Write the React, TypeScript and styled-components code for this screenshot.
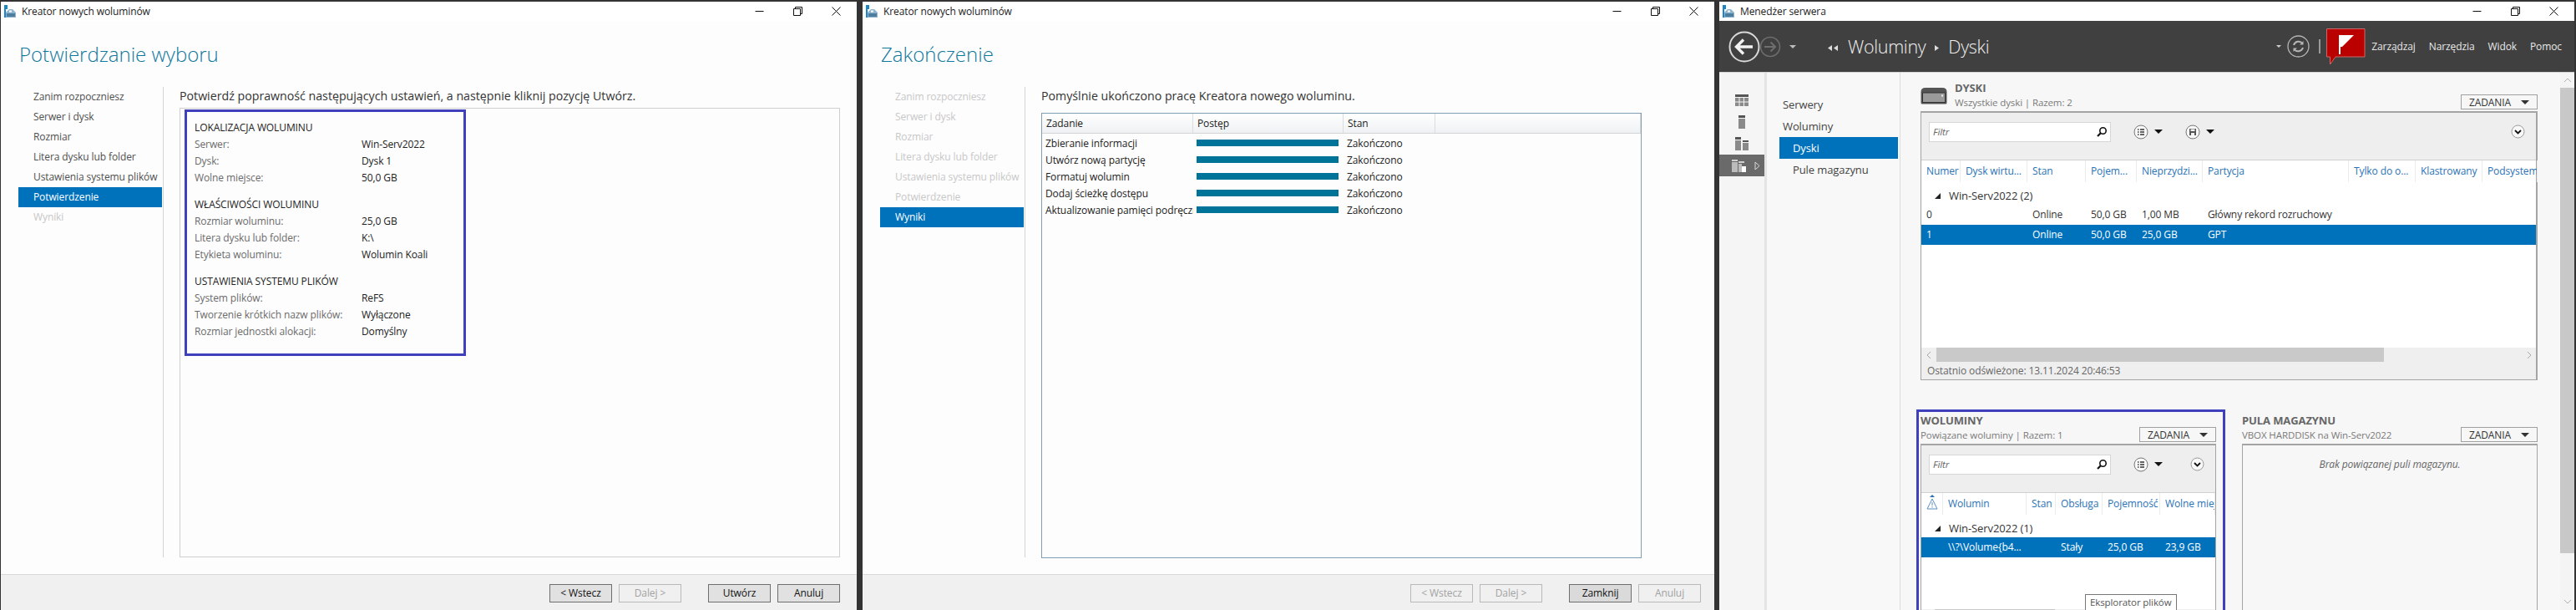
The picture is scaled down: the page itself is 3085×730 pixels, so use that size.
import React from 'react';
import styled, { createGlobalStyle } from 'styled-components';

const GlobalStyle = createGlobalStyle`
    html, body {
        margin: 0;
        padding: 0;
        background: #333333;
        overflow: hidden;
    }
    * {
        box-sizing: border-box;
    }
`;

const FONT = `'Open Sans', 'Noto Sans', sans-serif`;
const BLUE = '#0072bc';

const AppIcon = () => (
    <svg width="15" height="15" viewBox="0 0 15 15">
        <rect x="0" y="0" width="4" height="5" fill="#1a86c8" />
        <rect x="0" y="5" width="2" height="10" fill="#1a86c8" />
        <path d="M2 9 L6 5 H10 L14 9 V15 H2 Z" fill="#8fb3cc" />
        <rect x="3" y="10" width="10" height="4" fill="#4c7f9f" />
        <rect x="6" y="6.5" width="3" height="2" fill="#ffffff" />
    </svg>
);

const WindowControls = () => (
    <Controls>
        <ControlButton>
            <svg width="11" height="11" viewBox="0 0 11 11">
                <path d="M0.5 5.5 H10.5" stroke="#111" fill="none" />
            </svg>
        </ControlButton>
        <ControlButton>
            <svg width="11" height="11" viewBox="0 0 11 11">
                <path d="M0.5 2.5 H8.5 V10.5 H0.5 Z M2.5 2.5 V0.5 H10.5 V8.5 H8.5" stroke="#111" fill="none" />
            </svg>
        </ControlButton>
        <ControlButton>
            <svg width="11" height="11" viewBox="0 0 11 11">
                <path d="M0.5 0.5 L10.5 10.5 M10.5 0.5 L0.5 10.5" stroke="#111" fill="none" />
            </svg>
        </ControlButton>
    </Controls>
);

const STEPS = [
    'Zanim rozpoczniesz',
    'Serwer i dysk',
    'Rozmiar',
    'Litera dysku lub folder',
    'Ustawienia systemu plików',
    'Potwierdzenie',
    'Wyniki',
];

interface WizardProps {
    width: number;
    footerPad: number;
    heading: string;
    active: number;
    dimmedUntil: number;
    buttons: { label: string; enabled: boolean; strong?: boolean }[];
    children: React.ReactNode;
}

const Wizard = (props: WizardProps) => {
    const { width, footerPad, heading, active, dimmedUntil, buttons, children } = props;
    return (
        <WizardWindow $width={width}>
            <TitleBar>
                <AppIcon />
                <TitleText>Kreator nowych woluminów</TitleText>
                <WindowControls />
            </TitleBar>
            <WizardHeading>{heading}</WizardHeading>
            <WizardBody>
                <StepList>
                    {STEPS.map((step, i) => (
                        <Step key={step} $active={i === active} $dim={i !== active && (i > active || i < dimmedUntil)}>
                            {step}
                        </Step>
                    ))}
                </StepList>
                <WizardContent>{children}</WizardContent>
            </WizardBody>
            <WizardFooter $pad={footerPad}>
                {buttons.map((b, i) => (
                    <FootButton key={b.label} $enabled={b.enabled} $strong={b.strong} $wide={i === 2}>
                        {b.label}
                    </FootButton>
                ))}
            </WizardFooter>
        </WizardWindow>
    );
};

const SUMMARY = [
    {
        title: 'LOKALIZACJA WOLUMINU',
        rows: [
            ['Serwer:', 'Win-Serv2022'],
            ['Dysk:', 'Dysk 1'],
            ['Wolne miejsce:', '50,0 GB'],
        ],
    },
    {
        title: 'WŁAŚCIWOŚCI WOLUMINU',
        rows: [
            ['Rozmiar woluminu:', '25,0 GB'],
            ['Litera dysku lub folder:', 'K:\\'],
            ['Etykieta woluminu:', 'Wolumin Koali'],
        ],
    },
    {
        title: 'USTAWIENIA SYSTEMU PLIKÓW',
        rows: [
            ['System plików:', 'ReFS'],
            ['Tworzenie krótkich nazw plików:', 'Wyłączone'],
            ['Rozmiar jednostki alokacji:', 'Domyślny'],
        ],
    },
];

const RESULTS = [
    'Zbieranie informacji',
    'Utwórz nową partycję',
    'Formatuj wolumin',
    'Dodaj ścieżkę dostępu',
    'Aktualizowanie pamięci podręcznej',
];

const TOP_COLUMNS = [47, 80, 70, 61, 79, 175, 80, 80, 66];
const BOTTOM_COLUMNS = [26, 100, 35, 56, 69, 66];

const SearchIcon = () => (
    <svg width="14" height="14" viewBox="0 0 14 14">
        <circle cx="8.5" cy="5.5" r="3.7" stroke="#111" strokeWidth="1.6" fill="none" />
        <path d="M5.8 8.2 L2 12" stroke="#111" strokeWidth="2.2" />
    </svg>
);

const ListCircle = () => (
    <svg width="18" height="18" viewBox="0 0 18 18">
        <circle cx="9" cy="9" r="8" stroke="#777" fill="#f8f8f8" />
        <path d="M5 6 H6.5 M5 9 H6.5 M5 12 H6.5 M8 6 H13 M8 9 H13 M8 12 H13" stroke="#333" strokeWidth="1.4" />
    </svg>
);

const SaveCircle = () => (
    <svg width="18" height="18" viewBox="0 0 18 18">
        <circle cx="9" cy="9" r="8" stroke="#777" fill="#f8f8f8" />
        <rect x="5" y="5" width="8" height="8" fill="#555" />
        <rect x="6.5" y="5.5" width="5" height="2.5" fill="#f0f0f0" />
        <rect x="7" y="10" width="4" height="3" fill="#f0f0f0" />
    </svg>
);

const ChevronCircle = () => (
    <svg width="17" height="17" viewBox="0 0 17 17">
        <circle cx="8.5" cy="8.5" r="7.5" stroke="#999" fill="#f8f8f8" />
        <path d="M5 7 L8.5 10.5 L12 7" stroke="#111" strokeWidth="1.8" fill="none" />
    </svg>
);

const Filter = () => (
    <FilterBox>
        <FilterText>Filtr</FilterText>
        <SearchIcon />
    </FilterBox>
);

const Tasks = () => (
    <TasksButton>
        ZADANIA
        <CaretDown $size={5} />
    </TasksButton>
);

const HScrollBar = ({ thumb, lead }: { thumb: number; lead: number }) => (
    <HScroll>
        <HArrow $width={lead}>
            <svg width="6" height="10" viewBox="0 0 6 10">
                <path d="M5 1 L1 5 L5 9" stroke="#a8a8a8" fill="none" />
            </svg>
        </HArrow>
        <HThumb style={{ width: thumb }} />
        <HArrow $width={17} $end>
            <svg width="6" height="10" viewBox="0 0 6 10">
                <path d="M1 1 L5 5 L1 9" stroke="#a8a8a8" fill="none" />
            </svg>
        </HArrow>
    </HScroll>
);

const App = () => (
    <>
        <GlobalStyle />
        <Screen>
            <Wizard
                width={1025}
                footerPad={20}
                heading="Potwierdzanie wyboru"
                active={5}
                dimmedUntil={0}
                buttons={[
                    { label: '< Wstecz', enabled: true },
                    { label: 'Dalej >', enabled: false },
                    { label: 'Utwórz', enabled: true },
                    { label: 'Anuluj', enabled: true },
                ]}
            >
                <Intro>Potwierdź poprawność następujących ustawień, a następnie kliknij pozycję Utwórz.</Intro>
                <SummaryFrame>
                    <SummaryBox>
                        {SUMMARY.map((section) => (
                            <SummarySection key={section.title}>
                                <SummaryTitle>{section.title}</SummaryTitle>
                                {section.rows.map(([label, value]) => (
                                    <SummaryRow key={label}>
                                        <SummaryLabel>{label}</SummaryLabel>
                                        <span>{value}</span>
                                    </SummaryRow>
                                ))}
                            </SummarySection>
                        ))}
                    </SummaryBox>
                </SummaryFrame>
            </Wizard>

            <Wizard
                width={1020}
                footerPad={16}
                heading="Zakończenie"
                active={6}
                dimmedUntil={6}
                buttons={[
                    { label: '< Wstecz', enabled: false },
                    { label: 'Dalej >', enabled: false },
                    { label: 'Zamknij', enabled: true, strong: true },
                    { label: 'Anuluj', enabled: false },
                ]}
            >
                <Intro>Pomyślnie ukończono pracę Kreatora nowego woluminu.</Intro>
                <ResultList>
                    <ResultHead>
                        <span>Zadanie</span>
                        <span>Postęp</span>
                        <span>Stan</span>
                        <span />
                    </ResultHead>
                    {RESULTS.map((task) => (
                        <ResultRow key={task}>
                            <ResultTask>{task}</ResultTask>
                            <ProgressBar />
                            <span>Zakończono</span>
                        </ResultRow>
                    ))}
                </ResultList>
            </Wizard>

            <ServerWindow>
                <TitleBar>
                    <AppIcon />
                    <TitleText>Menedżer serwera</TitleText>
                    <WindowControls />
                </TitleBar>
                <DarkHeader>
                    <NavCircles>
                        <svg width="38" height="38" viewBox="0 0 38 38">
                            <circle cx="19" cy="19" r="17.5" stroke="#d8d8d8" strokeWidth="2" fill="none" />
                            <path d="M29 19 H10 M18 10.5 L9.5 19 L18 27.5" stroke="#f2f2f2" strokeWidth="3.4" fill="none" />
                        </svg>
                        <svg width="26" height="26" viewBox="0 0 26 26">
                            <circle cx="13" cy="13" r="11.5" stroke="#6e6e6e" strokeWidth="1.5" fill="none" />
                            <path d="M6 13 H19 M13.5 7.5 L19 13 L13.5 18.5" stroke="#6e6e6e" strokeWidth="2" fill="none" />
                        </svg>
                        <CaretDown $size={4} $color="#bdbdbd" />
                    </NavCircles>
                    <Crumbs>
                        <svg width="13" height="7" viewBox="0 0 13 7">
                            <path d="M5 0 V7 L0 3.5 Z M12 0 V7 L7 3.5 Z" fill="#dcdcdc" />
                        </svg>
                        <span>Woluminy</span>
                        <svg width="5" height="7" viewBox="0 0 5 7">
                            <path d="M0 0 V7 L5 3.5 Z" fill="#dcdcdc" />
                        </svg>
                        <span>Dyski</span>
                    </Crumbs>
                    <HeaderRight>
                        <CaretDown $size={3} $color="#d0d0d0" />
                        <svg width="27" height="27" viewBox="0 0 27 27">
                            <circle cx="13.5" cy="13.5" r="12.5" stroke="#b5b5b5" strokeWidth="1.3" fill="none" />
                            <path d="M8 12 A6 6 0 0 1 18.5 10 M19 15 A6 6 0 0 1 8.5 17" stroke="#b5b5b5" strokeWidth="2" fill="none" />
                            <path d="M19.5 7 V11.5 H15 Z M7.5 20 V15.5 H12 Z" fill="#b5b5b5" />
                        </svg>
                        <HeaderBar />
                        <svg width="47" height="44" viewBox="0 0 47 44">
                            <path d="M0.5 0.5 H46 V34 H11 L4.5 43 V34 H0.5 Z" fill="#bb0000" stroke="#c86a6a" />
                            <path d="M15 8 H17 V31 H15 Z" fill="#ffffff" />
                            <path d="M17 8 H33 L19 22 H17 Z" fill="#ffffff" />
                        </svg>
                        <MenuItems>
                            <span>Zarządzaj</span>
                            <span>Narzędzia</span>
                            <span>Widok</span>
                            <span>Pomoc</span>
                        </MenuItems>
                    </HeaderRight>
                </DarkHeader>

                <ServerMain>
                    <Rail>
                        <RailItem>
                            <svg width="16" height="14" viewBox="0 0 16 14">
                                <path d="M0 0 H16 V3 H0 Z" fill="#555" />
                                <path d="M0 4 H4.5 V8.5 H0 Z M5.5 4 H10 V8.5 H5.5 Z M11 4 H16 V8.5 H11 Z M0 9.5 H4.5 V14 H0 Z M5.5 9.5 H10 V14 H5.5 Z M11 9.5 H16 V14 H11 Z" fill="#8a8a8a" />
                            </svg>
                        </RailItem>
                        <RailItem>
                            <svg width="8" height="16" viewBox="0 0 8 16">
                                <path d="M0 0 H8 V3 H0 Z" fill="#555" />
                                <path d="M0 4 H8 V16 H0 Z" fill="#8a8a8a" />
                            </svg>
                        </RailItem>
                        <RailItem>
                            <svg width="16" height="16" viewBox="0 0 16 16">
                                <path d="M0 0 H7 V3 H0 Z M9 4 H16 V6 H9 Z" fill="#555" />
                                <path d="M0 4 H7 V16 H0 Z M9 7 H16 V16 H9 Z" fill="#8a8a8a" />
                            </svg>
                        </RailItem>
                        <RailItem $active>
                            <svg width="18" height="15" viewBox="0 0 18 15">
                                <path d="M0 0 H7 V2 H0 Z M8 2 H15 V4 H8 Z" fill="#d0d0d0" />
                                <path d="M0 3 H7 V15 H0 Z M8 5 H12 V15 H8 Z" fill="#bcbcbc" />
                                <path d="M12 8 H17 V15 H12 Z" fill="#ffffff" />
                            </svg>
                            <svg width="7" height="11" viewBox="0 0 7 11">
                                <path d="M1 1 L6 5.5 L1 10 Z" stroke="#d8d8d8" fill="none" />
                            </svg>
                        </RailItem>
                    </Rail>
                    <NavPane>
                        <NavItem>Serwery</NavItem>
                        <NavItem>Woluminy</NavItem>
                        <NavItem $child $active>Dyski</NavItem>
                        <NavItem $child>Pule magazynu</NavItem>
                    </NavPane>
                    <ContentArea>
                        <SectionHead>
                            <svg width="32" height="21" viewBox="0 0 32 21">
                                <path d="M0.5 6 Q0.5 1 6 1 H26 Q31.5 1 31.5 6 V19 Q31.5 20.5 30 20.5 H2 Q0.5 20.5 0.5 19 Z" fill="#555" />
                                <rect x="2.5" y="7" width="27" height="11.5" fill="#9a9a9a" stroke="#333" />
                                <rect x="25" y="9.5" width="2" height="2" fill="#eee" />
                            </svg>
                            <SectionTitles>
                                <SectionTitle>DYSKI</SectionTitle>
                                <SectionSub>Wszystkie dyski | Razem: 2</SectionSub>
                            </SectionTitles>
                            <Tasks />
                        </SectionHead>
                        <DiskPanel>
                            <Toolbar>
                                <Filter />
                                <ToolGroup>
                                    <ListCircle />
                                    <CaretDown $size={5} $color="#111" />
                                </ToolGroup>
                                <ToolGroup>
                                    <SaveCircle />
                                    <CaretDown $size={5} $color="#111" />
                                </ToolGroup>
                                <ToolEnd>
                                    <ChevronCircle />
                                </ToolEnd>
                            </Toolbar>
                            <GridHead $columns={TOP_COLUMNS}>
                                {['Numer', 'Dysk wirtu...', 'Stan', 'Pojem...', 'Nieprzydzi...', 'Partycja', 'Tylko do o...', 'Klastrowany', 'Podsystem'].map((h) => (
                                    <HeadCell key={h}>{h}</HeadCell>
                                ))}
                            </GridHead>
                            <GroupRow>
                                <CornerCaret />
                                Win-Serv2022 (2)
                            </GroupRow>
                            <GridRow $columns={TOP_COLUMNS}>
                                <Cell>0</Cell>
                                <Cell />
                                <Cell>Online</Cell>
                                <Cell>50,0 GB</Cell>
                                <Cell>1,00 MB</Cell>
                                <Cell>Główny rekord rozruchowy</Cell>
                            </GridRow>
                            <GridRow $columns={TOP_COLUMNS} $selected>
                                <Cell>1</Cell>
                                <Cell />
                                <Cell>Online</Cell>
                                <Cell>50,0 GB</Cell>
                                <Cell>25,0 GB</Cell>
                                <Cell>GPT</Cell>
                            </GridRow>
                            <GridFill />
                            <HScrollBar lead={18} thumb={536} />
                            <RefreshNote>Ostatnio odświeżone: 13.11.2024 20:46:53</RefreshNote>
                        </DiskPanel>

                        <BottomGrid>
                            <Highlighted>
                                <SectionHead>
                                    <SectionTitles>
                                        <SectionTitle>WOLUMINY</SectionTitle>
                                        <SectionSub>Powiązane woluminy | Razem: 1</SectionSub>
                                    </SectionTitles>
                                    <Tasks />
                                </SectionHead>
                                <BottomPanel>
                                    <Toolbar>
                                        <Filter />
                                        <ToolGroup>
                                            <ListCircle />
                                            <CaretDown $size={5} $color="#111" />
                                        </ToolGroup>
                                        <ToolEnd $right={13}>
                                            <ChevronCircle />
                                        </ToolEnd>
                                    </Toolbar>
                                    <GridHead $columns={BOTTOM_COLUMNS}>
                                        <HeadIcon>
                                            <svg width="14" height="18" viewBox="0 0 14 18">
                                                <path d="M7 0 L10 3 H4 Z" fill="#2a72b5" />
                                                <path d="M7 5 L13 17 H1 Z M7 9 V13 M7 14 V15.5" stroke="#5b8fc0" fill="none" />
                                            </svg>
                                        </HeadIcon>
                                        {['Wolumin', 'Stan', 'Obsługa', 'Pojemność', 'Wolne miejsce'].map((h) => (
                                            <HeadCell key={h}>{h}</HeadCell>
                                        ))}
                                    </GridHead>
                                    <GroupRow>
                                        <CornerCaret />
                                        Win-Serv2022 (1)
                                    </GroupRow>
                                    <GridRow $columns={BOTTOM_COLUMNS} $selected>
                                        <Cell />
                                        <Cell>{'\\\\?\\Volume{b4...'}</Cell>
                                        <Cell />
                                        <Cell>Stały</Cell>
                                        <Cell>25,0 GB</Cell>
                                        <Cell>23,9 GB</Cell>
                                    </GridRow>
                                    <GridFill />
                                    <HScrollBar lead={16} thumb={144} />
                                    <Tooltip>Eksplorator plików</Tooltip>
                                </BottomPanel>
                            </Highlighted>
                            <div>
                                <SectionHead>
                                    <SectionTitles>
                                        <SectionTitle>PULA MAGAZYNU</SectionTitle>
                                        <SectionSub>VBOX HARDDISK na Win-Serv2022</SectionSub>
                                    </SectionTitles>
                                    <Tasks />
                                </SectionHead>
                                <EmptyPanel>Brak powiązanej puli magazynu.</EmptyPanel>
                            </div>
                        </BottomGrid>
                    </ContentArea>
                    <VScroll>
                        <ScrollArrow>
                            <svg width="10" height="6" viewBox="0 0 10 6">
                                <path d="M1 5 L5 1 L9 5" stroke="#b0b0b0" fill="none" />
                            </svg>
                        </ScrollArrow>
                        <VThumb />
                        <ScrollArrow $end>
                            <svg width="10" height="6" viewBox="0 0 10 6">
                                <path d="M1 1 L5 5 L9 1" stroke="#b0b0b0" fill="none" />
                            </svg>
                        </ScrollArrow>
                    </VScroll>
                </ServerMain>
            </ServerWindow>
        </Screen>
    </>
);

export default App;

const Screen = styled.div`
    display: flex;
    width: 3085px;
    height: 730px;
    padding: 2px 2px 0 1px;
    gap: 0;
    background: #333333;
    font-family: ${FONT};
    font-size: 12px;
    letter-spacing: -0.1px;
    color: #222222;
    overflow: hidden;
`;

const TitleBar = styled.div`
    display: flex;
    align-items: center;
    flex: none;
    height: 23px;
    padding-left: 4px;
    background: #ffffff;
`;

const TitleText = styled.div`
    margin-left: 6px;
    font-size: 12px;
    color: #1c1c1c;
`;

const Controls = styled.div`
    display: flex;
    margin-left: auto;
    padding-right: 2px;
`;

const ControlButton = styled.div`
    display: flex;
    align-items: center;
    justify-content: center;
    width: 46px;
    height: 23px;
`;

const WizardWindow = styled.div<{ $width: number }>`
    display: flex;
    flex-direction: column;
    flex: none;
    width: ${({ $width }) => $width}px;
    margin-right: 7px;
    background: #fdfdfd;
`;

const WizardHeading = styled.div`
    flex: none;
    height: 79px;
    padding: 24px 0 0 22px;
    font-size: 24px;
    font-weight: 300;
    line-height: 32px;
    letter-spacing: 0;
    color: #10789c;
`;

const WizardBody = styled.div`
    display: flex;
    flex: none;
    height: 563px;
    padding-left: 21px;
`;

const StepList = styled.div`
    flex: none;
    width: 174px;
    height: 100%;
    padding-right: 1px;
    border-right: 1px solid #d4d4d4;
`;

const Step = styled.div<{ $active?: boolean; $dim?: boolean }>`
    height: 24px;
    padding-left: 18px;
    line-height: 24px;
    font-size: 12px;
    white-space: nowrap;
    color: ${({ $active, $dim }) => ($active ? '#ffffff' : $dim ? '#c8c8c8' : '#4f4f4f')};
    background: ${({ $active }) => ($active ? BLUE : 'transparent')};
`;

const WizardContent = styled.div`
    display: flex;
    flex-direction: column;
    flex: 1;
    padding: 0 20px 0 19px;
`;

const Intro = styled.div`
    flex: none;
    height: 25px;
    font-size: 14.2px;
    line-height: 22px;
    letter-spacing: 0;
    color: #333333;
`;

const SummaryFrame = styled.div`
    flex: 1;
    padding: 1px 0 0 5px;
    border: 1px solid #cfcfcf;
    background: #fdfdfd;
`;

const SummaryBox = styled.div`
    width: 337px;
    height: 295px;
    padding: 9px 0 0 9px;
    border: 3px solid #4040bd;
`;

const SummarySection = styled.div`
    height: 92px;
`;

const SummaryTitle = styled.div`
    height: 20px;
    line-height: 20px;
    color: #222222;
`;

const SummaryRow = styled.div`
    display: grid;
    grid-template-columns: 200px 1fr;
    height: 20px;
    line-height: 20px;
`;

const SummaryLabel = styled.span`
    color: #6b6b6b;
    white-space: nowrap;
`;

const ResultList = styled.div`
    flex: none;
    width: 719px;
    height: 533px;
    margin-top: 6px;
    border: 1px solid #7f9db3;
`;

const ResultHead = styled.div`
    display: grid;
    grid-template-columns: 181px 180px 110px 1fr;
    height: 24px;
    margin-bottom: 1px;
    border-bottom: 1px solid #d5d5d5;
    background: linear-gradient(#ffffff, #eef1f3);

    span {
        padding-left: 5px;
        line-height: 23px;
        border-right: 1px solid #dcdcdc;
    }
`;

const ResultRow = styled.div`
    display: grid;
    grid-template-columns: 181px 184px 1fr;
    height: 20px;
    align-items: center;
`;

const ResultTask = styled.span`
    padding: 0 5px 0 4px;
    white-space: nowrap;
    overflow: hidden;
`;

const ProgressBar = styled.div`
    width: 170px;
    height: 8px;
    margin-left: 4px;
    background: #007399;
`;

const WizardFooter = styled.div<{ $pad: number }>`
    display: flex;
    flex: 1;
    justify-content: flex-end;
    gap: 8px;
    margin-top: 20px;
    padding: 11px ${({ $pad }) => $pad}px 0 0;
    border-top: 1px solid #d9d9d9;
    background: #f0f0f0;
`;

const FootButton = styled.div<{ $enabled: boolean; $strong?: boolean; $wide?: boolean }>`
    width: 75px;
    height: 22px;
    margin-left: ${({ $wide }) => ($wide ? '24px' : '0')};
    font-size: 12px;
    line-height: 20px;
    text-align: center;
    color: ${({ $enabled }) => ($enabled ? '#111111' : '#a2a2a2')};
    background: ${({ $enabled, $strong }) => ($strong ? '#dadada' : $enabled ? '#e1e1e1' : '#f0f0f0')};
    border: 1px solid ${({ $enabled }) => ($enabled ? '#6f6f6f' : '#b9b9b9')};
`;

const ServerWindow = styled.div`
    display: flex;
    flex-direction: column;
    flex: none;
    width: 1024px;
    margin-left: -1px;
    background: #f7f7f7;
`;

const DarkHeader = styled.div`
    display: flex;
    align-items: center;
    flex: none;
    height: 62px;
    padding-left: 11px;
    background: #404040;
    border-bottom: 1px solid #d5d5d5;
`;

const NavCircles = styled.div`
    display: flex;
    align-items: center;
    gap: 0;

    svg:nth-child(2) {
        margin-left: -1px;
    }
    span {
        margin-left: 10px;
    }
`;

const CaretDown = styled.span<{ $size: number; $color?: string }>`
    display: inline-block;
    width: 0;
    height: 0;
    margin-left: ${({ $size }) => $size + 2}px;
    border-left: ${({ $size }) => $size}px solid transparent;
    border-right: ${({ $size }) => $size}px solid transparent;
    border-top: ${({ $size }) => $size}px solid ${({ $color }) => $color || '#333333'};
`;

const Crumbs = styled.div`
    display: flex;
    align-items: center;
    gap: 11px;
    margin-left: 38px;
    font-size: 21.5px;
    font-weight: 300;
    letter-spacing: -0.3px;
    color: #f0f0f0;

    svg {
        flex: none;
        margin-top: 3px;
    }
`;

const HeaderRight = styled.div`
    display: flex;
    align-items: center;
    margin-left: auto;
    gap: 7px;
`;

const HeaderBar = styled.div`
    width: 2px;
    height: 17px;
    margin: 0 0 0 4px;
    background: #9a9a9a;
`;

const MenuItems = styled.div`
    display: flex;
    gap: 16px;
    margin-right: 15px;
    font-size: 12px;
    color: #e8e8e8;
`;

const ServerMain = styled.div`
    display: flex;
    flex: 1;
    min-height: 0;
    overflow: hidden;
`;

const Rail = styled.div`
    flex: none;
    width: 57px;
    padding-top: 20px;
    background: #f5f5f5;
    border-right: 3px solid #e4e4e4;
`;

const RailItem = styled.div<{ $active?: boolean }>`
    display: flex;
    align-items: center;
    justify-content: ${({ $active }) => ($active ? 'flex-start' : 'center')};
    gap: 9px;
    height: 26px;
    padding-left: ${({ $active }) => ($active ? '15px' : '0')};
    background: ${({ $active }) => ($active ? '#6a6a6a' : 'transparent')};
`;

const NavPane = styled.div`
    flex: none;
    width: 160px;
    padding: 25px 2px 0 15px;
    background: #f8f8f8;
    border-right: 1px solid #dcdcdc;
`;

const NavItem = styled.div<{ $child?: boolean; $active?: boolean }>`
    height: 26px;
    padding-left: ${({ $child }) => ($child ? '16px' : '4px')};
    line-height: 26px;
    font-size: 13px;
    color: ${({ $active }) => ($active ? '#ffffff' : '#444444')};
    background: ${({ $active }) => ($active ? BLUE : 'transparent')};
`;

const ContentArea = styled.div`
    flex: none;
    width: 790px;
    padding: 11px 27px 0 24px;
    background: #f7f7f7;
`;

const SectionHead = styled.div`
    display: flex;
    align-items: flex-end;
    gap: 9px;
    height: 35px;

    & > svg {
        margin-bottom: 8px;
    }
`;

const SectionTitles = styled.div`
    flex: 1;
    white-space: nowrap;
`;

const SectionTitle = styled.div`
    height: 16px;
    font-size: 13px;
    font-weight: 700;
    line-height: 15px;
    color: #666666;
`;

const SectionSub = styled.div`
    height: 19px;
    font-size: 11.5px;
    line-height: 17px;
    color: #7a7a7a;
`;

const TasksButton = styled.div`
    display: flex;
    align-items: center;
    justify-content: space-between;
    flex: none;
    width: 92px;
    height: 18px;
    margin-bottom: 2px;
    padding: 0 9px;
    font-size: 12px;
    color: #333333;
    background: #f7f7f7;
    border: 1px solid #a0a0a0;
`;

const DiskPanel = styled.div`
    display: flex;
    flex-direction: column;
    height: 322px;
    background: #ffffff;
    border: 1px solid #a4a4a4;
    border-top-width: 2px;
    border-right-width: 2px;
`;

const Toolbar = styled.div`
    display: flex;
    align-items: center;
    flex: none;
    height: 57px;
    padding: 0 0 11px 9px;
    background: #eeeeee;
    border-bottom: 1px solid #d0d0d0;
`;

const FilterBox = styled.div`
    display: flex;
    align-items: center;
    justify-content: space-between;
    width: 218px;
    height: 24px;
    padding: 0 3px 0 4px;
    background: #ffffff;
    border: 1px solid #d6d6d6;
`;

const FilterText = styled.span`
    font-size: 11.5px;
    font-style: italic;
    color: #666666;
`;

const ToolGroup = styled.div`
    display: flex;
    align-items: center;
    margin-left: 27px;
`;

const ToolEnd = styled.div<{ $right?: number }>`
    display: flex;
    margin-left: auto;
    margin-right: ${({ $right }) => $right ?? 13}px;
`;

const columnsOf = (columns: number[]) => columns.map((c) => `${c}px`).join(' ');

const GridHead = styled.div<{ $columns: number[] }>`
    display: grid;
    grid-template-columns: ${({ $columns }) => columnsOf($columns)};
    flex: none;
    height: 31px;
    background: #ffffff;
`;

const HeadCell = styled.div`
    height: 26px;
    padding-left: 6px;
    line-height: 26px;
    font-size: 12px;
    color: #2a72b5;
    white-space: nowrap;
    overflow: hidden;
    border-right: 1px solid #ececec;
`;

const HeadIcon = styled.div`
    display: flex;
    justify-content: center;
    height: 26px;
    padding-top: 2px;
    border-right: 1px solid #ececec;
`;

const GroupRow = styled.div`
    display: flex;
    align-items: center;
    flex: none;
    height: 22px;
    padding-left: 16px;
    font-size: 13px;
    color: #333333;
`;

const CornerCaret = styled.span`
    width: 0;
    height: 0;
    margin-right: 10px;
    border-left: 7px solid transparent;
    border-bottom: 7px solid #222222;
`;

const GridRow = styled.div<{ $columns: number[]; $selected?: boolean }>`
    display: grid;
    grid-template-columns: ${({ $columns }) => columnsOf($columns)};
    flex: none;
    height: 24px;
    line-height: 24px;
    color: ${({ $selected }) => ($selected ? '#ffffff' : '#333333')};
    background: ${({ $selected }) => ($selected ? BLUE : 'transparent')};
`;

const Cell = styled.div`
    padding-left: 6px;
    white-space: nowrap;
`;

const GridFill = styled.div`
    flex: 1;
`;

const HScroll = styled.div`
    display: flex;
    flex: none;
    height: 17px;
    background: #efefef;
`;

const HArrow = styled.div<{ $width: number; $end?: boolean }>`
    display: flex;
    align-items: center;
    justify-content: center;
    flex: none;
    width: ${({ $width }) => $width}px;
    margin-left: ${({ $end }) => ($end ? 'auto' : '0')};
`;

const HThumb = styled.div`
    flex: none;
    height: 100%;
    background: #c9c9c9;
`;

const RefreshNote = styled.div`
    flex: none;
    height: 21px;
    padding-left: 7px;
    line-height: 21px;
    font-size: 12px;
    color: #666666;
    background: #efefef;
`;

const BottomGrid = styled.div`
    display: grid;
    grid-template-columns: 354px 354px;
    gap: 31px;
    margin-top: 41px;
`;

const Highlighted = styled.div`
    position: relative;

    &::after {
        content: '';
        position: absolute;
        left: -5px;
        top: -6px;
        width: 364px;
        height: 300px;
        border: 3px solid #4040bd;
        pointer-events: none;
    }
`;

const BottomPanel = styled.div`
    position: relative;
    display: flex;
    flex-direction: column;
    height: 215px;
    background: #ffffff;
    border: 1px solid #a4a4a4;
    border-top-width: 2px;
    border-bottom: 0;
`;

const Tooltip = styled.div`
    position: absolute;
    left: 196px;
    top: 178px;
    width: 110px;
    height: 20px;
    padding-left: 5px;
    line-height: 18px;
    font-size: 11.5px;
    white-space: nowrap;
    color: #555555;
    background: #ffffff;
    border: 1px solid #777777;
`;

const EmptyPanel = styled.div`
    height: 215px;
    padding-top: 14px;
    text-align: center;
    font-size: 12px;
    font-style: italic;
    color: #666666;
    background: #f7f7f7;
    border: 1px solid #a4a4a4;
    border-top-width: 2px;
    border-bottom: 0;
`;

const VScroll = styled.div`
    display: flex;
    flex-direction: column;
    flex: 1;
    background: #f4f4f4;
`;

const ScrollArrow = styled.div<{ $end?: boolean }>`
    display: flex;
    align-items: center;
    justify-content: center;
    flex: none;
    height: 18px;
    margin-top: ${({ $end }) => ($end ? 'auto' : '0')};
    margin-bottom: ${({ $end }) => ($end ? '1px' : '0')};
`;

const VThumb = styled.div`
    flex: none;
    height: 557px;
    background: #c8c8c8;
`;
